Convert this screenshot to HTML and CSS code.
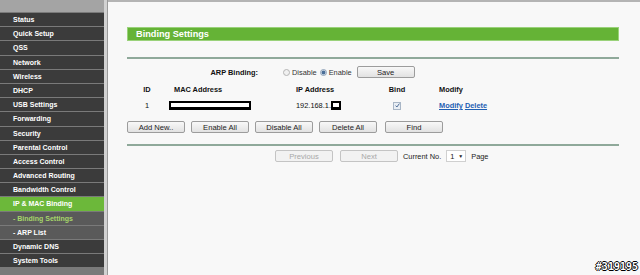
FILE: index.html
```html
<!DOCTYPE html>
<html>
<head>
    <meta charset="UTF-8">
    <title>IP &amp; MAC Binding</title>
    <link rel="stylesheet" href="styles.css">
</head>
<body>
<div class="page">
    <!-- left menu -->
    <div class="menu">
        <div class="menu-top"></div>
        <a class="item">Status</a>
        <a class="item">Quick Setup</a>
        <a class="item">QSS</a>
        <a class="item">Network</a>
        <a class="item">Wireless</a>
        <a class="item">DHCP</a>
        <a class="item">USB Settings</a>
        <a class="item">Forwarding</a>
        <a class="item">Security</a>
        <a class="item">Parental Control</a>
        <a class="item">Access Control</a>
        <a class="item">Advanced Routing</a>
        <a class="item">Bandwidth Control</a>
        <a class="item active">IP &amp; MAC Binding</a>
        <a class="item sub current">- Binding Settings</a>
        <a class="item sub">- ARP List</a>
        <a class="item">Dynamic DNS</a>
        <a class="item">System Tools</a>
    </div>
    <div class="divider"></div>

    <div class="main">
        <div class="content">
            <div class="title">Binding Settings</div>
            <div class="rule"></div>

            <div class="arp">
                <span class="arp-label">ARP Binding:</span>
                <span class="arp-opts">
                    <input type="radio" name="arp" class="radio"><span>Disable</span>
                    <input type="radio" name="arp" class="radio" checked><span>Enable</span>
                    <button type="button" class="btn save">Save</button>
                </span>
            </div>

            <div class="list">
                <div class="cell head id">ID</div>
                <div class="cell head mac">MAC Address</div>
                <div class="cell head">IP Address</div>
                <div class="cell head"><span class="bind">Bind</span></div>
                <div class="cell head">Modify</div>

                <div class="cell id">1</div>
                <div class="cell"><span class="mask mac-mask"></span></div>
                <div class="cell">192.168.1.<span class="mask ip-mask"></span></div>
                <div class="cell">
                    <span class="bind">
                        <span class="check">
                            <svg width="5" height="5" viewBox="0 0 5 5"><path d="M0.6 2.6 L1.9 4 L4.4 0.6" fill="none" stroke="#3d5f8c" stroke-width="0.9"/></svg>
                        </span>
                    </span>
                </div>
                <div class="cell"><a href="#" class="link">Modify</a> <a href="#" class="link">Delete</a></div>
            </div>

            <div class="actions">
                <button type="button" class="btn">Add New..</button>
                <button type="button" class="btn">Enable All</button>
                <button type="button" class="btn">Disable All</button>
                <button type="button" class="btn">Delete All</button>
                <button type="button" class="btn find">Find</button>
            </div>

            <div class="rule rule-low"></div>

            <div class="pager">
                <button type="button" class="btn" disabled>Previous</button>
                <button type="button" class="btn" disabled>Next</button>
                <span>Current No.</span>
                <span class="select">1 <span class="arrow">&#9660;</span></span>
                <span>Page</span>
            </div>
        </div>
    </div>
</div>
<div class="stamp">#319195</div>
</body>
</html>
```

FILE: styles.css
```css
body {
    margin: 0;
    font-family: "Liberation Sans", Arial, sans-serif;
    font-size: 7.4px;
    color: #111;
    background: #f8f8f8;
}

.page {
    display: flex;
    height: 275px;
    overflow: hidden;
}

/* left menu */
.menu {
    width: 104px;
    flex-shrink: 0;
    background: #7a7a7a;
    display: flex;
    flex-direction: column;
}
.menu-top {
    height: 12px;
    background: #a4a4a4;
}
.item {
    display: block;
    height: 13.2px;
    line-height: 13.2px;
    margin-top: 1px;
    padding-left: 13px;
    background: #3b3b3b;
    color: #fff;
    font-weight: bold;
    font-size: 7px;
    white-space: nowrap;
}
.item.active {
    background: #6cb83a;
}
.item.sub {
    background: #5a5a5a;
}
.item.current {
    color: #a6d66a;
}

.divider {
    width: 3px;
    flex-shrink: 0;
    background: #d2d2d2;
    border-right: 1px solid #9a9a9a;
}

.main {
    flex: 1;
    border-top: 2px solid #b4b4b4;
    padding: 25px 0 0 19px;
}
.content {
    width: 492px;
}

.title {
    height: 14px;
    line-height: 13px;
    box-sizing: border-box;
    background: #65b336;
    border: 1px solid #9ad27a;
    color: #fff;
    font-size: 9.2px;
    font-weight: bold;
    padding-left: 8px;
}
.rule {
    margin-top: 16px;
    border-top: 2px solid #8fa99a;
}
.rule-low {
    margin-top: 11px;
}

/* ARP binding row */
.arp {
    display: grid;
    grid-template-columns: 131px 1fr;
    column-gap: 25px;
    align-items: center;
    margin-top: 7px;
    height: 12px;
}
.arp-label {
    text-align: right;
    font-weight: bold;
}
.arp-opts {
    display: flex;
    align-items: center;
    gap: 1px;
    color: #333;
}
.radio {
    appearance: none;
    width: 7px;
    height: 7px;
    margin: 0 1px 0 0;
    border: 1px solid #b4b4b4;
    border-radius: 50%;
    background: #f0f0f0;
}
.radio:checked {
    background: radial-gradient(circle, #4a6e98 0 1.6px, #cdd9e6 2.2px);
    border-color: #8ea2b8;
}
.radio + span + .radio {
    margin-left: 2px;
}

.btn {
    height: 12px;
    width: 58px;
    padding: 0;
    font-family: inherit;
    font-size: 7.6px;
    color: #222;
    background: linear-gradient(#f8f8f8, #e2e2e2);
    border: 1px solid #9c9c9c;
    border-radius: 2px;
}
.btn:disabled {
    color: #a8a8a8;
    border-color: #c4c4c4;
    background: #f2f2f2;
}
.save {
    margin-left: 4px;
}

/* binding list */
.list {
    display: grid;
    grid-template-columns: 40px 129px 91px 52px 1fr;
    grid-auto-rows: 11px;
    row-gap: 5px;
    align-items: center;
    margin-top: 6px;
}
.cell {
    white-space: nowrap;
}
.head {
    font-weight: bold;
}
.id {
    text-align: center;
}
.mac {
    padding-left: 7px;
}
.bind {
    display: inline-flex;
    justify-content: center;
    width: 20px;
}
.mask {
    display: inline-block;
    box-sizing: border-box;
    height: 9px;
    border: 2px solid #000;
    border-bottom-width: 3px;
    background: #fff;
    vertical-align: middle;
}
.mac-mask {
    width: 82px;
    margin-left: 2px;
}
.ip-mask {
    width: 10px;
}
.check {
    display: inline-flex;
    align-items: center;
    justify-content: center;
    box-sizing: border-box;
    width: 8px;
    height: 8px;
    border: 1px solid #a9b6c6;
    background: #e9eef4;
}
.link {
    color: #1f5fb3;
    font-weight: bold;
    text-decoration: underline;
}

.actions {
    display: flex;
    gap: 6px;
    margin-top: 10px;
}
.find {
    margin-left: 2px;
}

/* paging */
.pager {
    display: flex;
    align-items: center;
    gap: 5px;
    margin: 4px 0 0 148px;
    color: #222;
}
.pager .btn + .btn {
    margin-left: 2px;
}
.select {
    display: inline-flex;
    justify-content: space-between;
    align-items: center;
    box-sizing: border-box;
    width: 20px;
    height: 12px;
    padding: 0 2px 0 3px;
    background: #fff;
    border: 1px solid #d0d0d0;
}
.arrow {
    font-size: 5px;
}

.stamp {
    position: absolute;
    right: 2px;
    bottom: 3px;
    font-family: "DejaVu Sans Mono", monospace;
    font-weight: bold;
    font-size: 10px;
    color: #fff;
    text-shadow: 1px 0 #000, -1px 0 #000, 0 1px #000, 0 -1px #000;
}
```
